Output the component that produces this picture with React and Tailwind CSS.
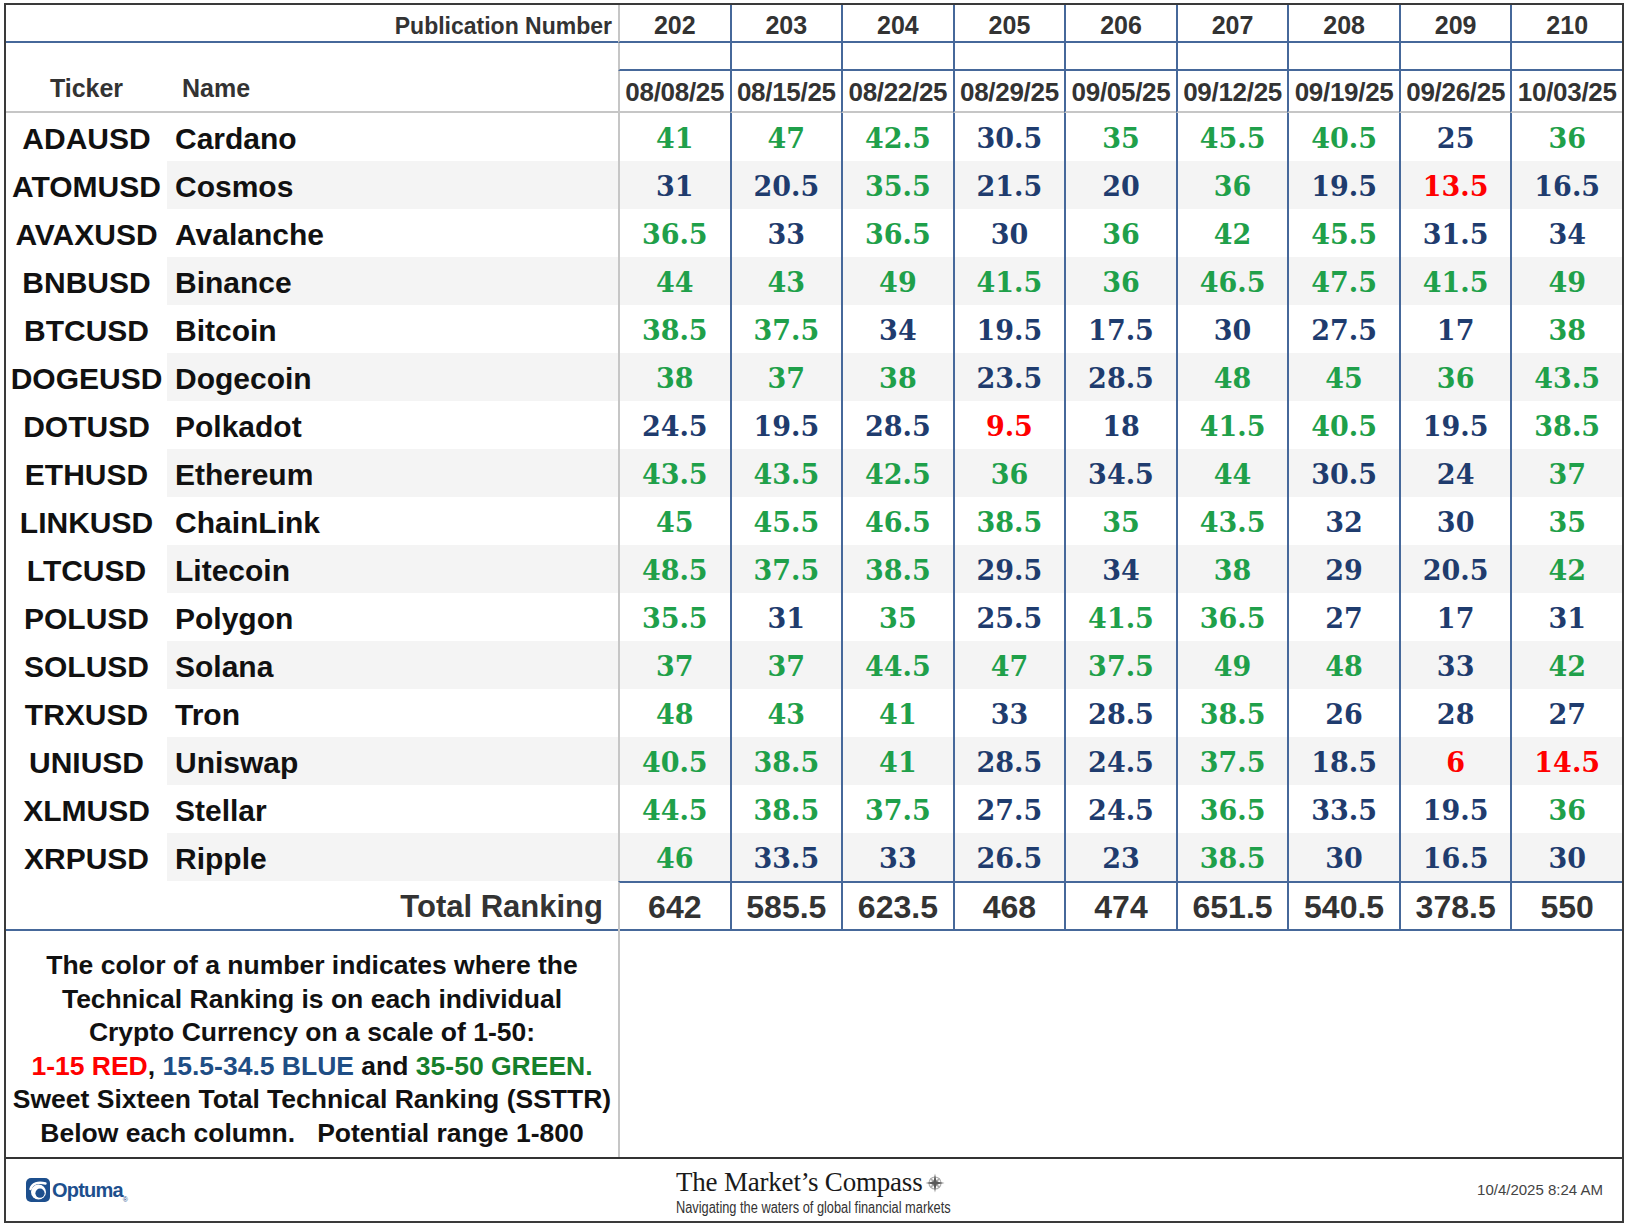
import React from 'react';

const COLS = [
  ['202', '08/08/25'],
  ['203', '08/15/25'],
  ['204', '08/22/25'],
  ['205', '08/29/25'],
  ['206', '09/05/25'],
  ['207', '09/12/25'],
  ['208', '09/19/25'],
  ['209', '09/26/25'],
  ['210', '10/03/25'],
];

const ROWS = [
  ['ADAUSD', 'Cardano', [41, 47, 42.5, 30.5, 35, 45.5, 40.5, 25, 36]],
  ['ATOMUSD', 'Cosmos', [31, 20.5, 35.5, 21.5, 20, 36, 19.5, 13.5, 16.5]],
  ['AVAXUSD', 'Avalanche', [36.5, 33, 36.5, 30, 36, 42, 45.5, 31.5, 34]],
  ['BNBUSD', 'Binance', [44, 43, 49, 41.5, 36, 46.5, 47.5, 41.5, 49]],
  ['BTCUSD', 'Bitcoin', [38.5, 37.5, 34, 19.5, 17.5, 30, 27.5, 17, 38]],
  ['DOGEUSD', 'Dogecoin', [38, 37, 38, 23.5, 28.5, 48, 45, 36, 43.5]],
  ['DOTUSD', 'Polkadot', [24.5, 19.5, 28.5, 9.5, 18, 41.5, 40.5, 19.5, 38.5]],
  ['ETHUSD', 'Ethereum', [43.5, 43.5, 42.5, 36, 34.5, 44, 30.5, 24, 37]],
  ['LINKUSD', 'ChainLink', [45, 45.5, 46.5, 38.5, 35, 43.5, 32, 30, 35]],
  ['LTCUSD', 'Litecoin', [48.5, 37.5, 38.5, 29.5, 34, 38, 29, 20.5, 42]],
  ['POLUSD', 'Polygon', [35.5, 31, 35, 25.5, 41.5, 36.5, 27, 17, 31]],
  ['SOLUSD', 'Solana', [37, 37, 44.5, 47, 37.5, 49, 48, 33, 42]],
  ['TRXUSD', 'Tron', [48, 43, 41, 33, 28.5, 38.5, 26, 28, 27]],
  ['UNIUSD', 'Uniswap', [40.5, 38.5, 41, 28.5, 24.5, 37.5, 18.5, 6, 14.5]],
  ['XLMUSD', 'Stellar', [44.5, 38.5, 37.5, 27.5, 24.5, 36.5, 33.5, 19.5, 36]],
  ['XRPUSD', 'Ripple', [46, 33.5, 33, 26.5, 23, 38.5, 30, 16.5, 30]],
];

const TOTALS = ['642', '585.5', '623.5', '468', '474', '651.5', '540.5', '378.5', '550'];

const GRID = 'grid grid-cols-[161px_451px_repeat(9,minmax(0,1fr))]';

// first data column is divided by a grey rule, the rest by blue ones
const divider = (j) => (j === 0 ? 'border-l-2 border-l-[#c6c6c6]' : 'border-l-2 border-l-[#46689a]');

const tone = (v) => {
  if (v <= 15) return 'text-[#ff0000]';
  if (v < 35) return 'text-[#1f3c6e]';
  return 'text-[#1fa04a]';
};

const OptumaMark = () => (
  <svg width="24" height="24" viewBox="0 0 24 24">
    <rect x="0" y="0" width="24" height="24" rx="5" fill="#1d4f8d" />
    <circle cx="12.5" cy="14" r="7.5" fill="#ffffff" />
    <circle cx="14" cy="15.2" r="4.6" fill="#1d4f8d" />
    <path d="M4.5 11 C6 5.5 12 3.5 19.5 5.5" stroke="#ffffff" strokeWidth="2.4" fill="none" strokeLinecap="round" />
  </svg>
);

const CompassRose = () => (
  <svg width="20" height="20" viewBox="0 0 20 20">
    <circle cx="10" cy="10" r="6" fill="none" stroke="#b0b0b0" strokeWidth="1.2" />
    <path d="M10 3 L11.6 8.4 L17 10 L11.6 11.6 L10 17 L8.4 11.6 L3 10 L8.4 8.4 Z" fill="#a8a8a8" transform="rotate(45 10 10)" />
    <path d="M10 0.5 L11.4 8.6 L19.5 10 L11.4 11.4 L10 19.5 L8.6 11.4 L0.5 10 L8.6 8.6 Z" fill="#5a5a5a" />
  </svg>
);

export default function App() {
  return (
    <div className="w-[1629px] h-[1228px] bg-white overflow-hidden font-['Liberation_Sans',Arial,sans-serif]">
      <div className="mt-[3px] ml-[4px] w-[1620px] h-[1220px] border-2 border-[#3a3a3a] flex flex-col">
        {/* header */}
        <div className={`${GRID} grid-rows-[38px_28px_42px]`}>
          <div className="col-span-2 border-b-2 border-b-[#46689a] flex items-center justify-end pr-[6px] pt-[6px] text-[23px] font-bold text-[#333]">
            Publication Number
          </div>
          {COLS.map((c, j) => (
            <div key={c[0]} className={`${divider(j)} border-b-2 border-b-[#46689a] flex items-center justify-center pt-[6px] text-[25px] font-bold text-[#333]`}>
              {c[0]}
            </div>
          ))}
          <div className="col-span-2 row-span-2 border-b-2 border-b-[#c6c6c6] flex items-end pb-[4px] text-[25px] font-bold text-[#333]">
            <div className="w-[161px] text-center">Ticker</div>
            <div className="pl-[15px]">Name</div>
          </div>
          {COLS.map((c, j) => (
            <div key={c[0] + 'e'} className={`${divider(j)} border-b-2 border-b-[#46689a]`} />
          ))}
          {COLS.map((c, j) => (
            <div key={c[1]} className={`${divider(j)} border-b-2 border-b-[#c6c6c6] flex items-center justify-center pt-[3px] text-[26px] font-bold text-[#333] tracking-[-0.3px] whitespace-nowrap`}>
              {c[1]}
            </div>
          ))}
        </div>

        {/* body */}
        {ROWS.map(([ticker, name, vals], i) => {
          const stripe = i % 2 === 1 ? 'bg-[#f4f4f4]' : 'bg-white';
          return (
            <div key={ticker} className={`${GRID} h-[48px]`}>
              <div className="flex items-center justify-center pt-[3px] text-[30px] font-bold text-[#111] whitespace-nowrap">{ticker}</div>
              <div className={`${stripe} flex items-center pl-[8px] pt-[3px] text-[30px] font-bold text-[#111]`}>{name}</div>
              {vals.map((v, j) => (
                <div key={j} className={`${divider(j)} ${stripe} ${tone(v)} flex items-center justify-center pt-[5px] font-['DejaVu_Serif',serif] text-[27px] font-bold`}>
                  {v}
                </div>
              ))}
            </div>
          );
        })}

        {/* totals */}
        <div className={`${GRID} h-[50px] border-b-2 border-b-[#46689a]`}>
          <div className="col-span-2 flex items-center justify-end pr-[15px] pt-[2px] text-[31px] font-bold text-[#333]">Total Ranking</div>
          {TOTALS.map((t, j) => (
            <div key={j} className={`${divider(j)} border-t-2 border-t-[#46689a] flex items-center justify-center text-[32px] font-bold text-[#333]`}>
              {t}
            </div>
          ))}
        </div>

        {/* legend */}
        <div className={`${GRID} h-[226px]`}>
          <div className="col-span-2 pt-[18px] text-center text-[26.5px] leading-[33.6px] font-bold text-[#111] whitespace-pre">
            <div>The color of a number indicates where the</div>
            <div>Technical Ranking is on each individual</div>
            <div>Crypto Currency on a scale of 1-50:</div>
            <div>
              <span className="text-[#ff0000]">1-15 RED</span>, <span className="text-[#1f4e85]">15.5-34.5 BLUE</span> and{' '}
              <span className="text-[#16802c]">35-50 GREEN.</span>
            </div>
            <div>Sweet Sixteen Total Technical Ranking (SSTTR)</div>
            <div>{'Below each column.   Potential range 1-800'}</div>
          </div>
          <div className="col-span-9 border-l-2 border-l-[#c6c6c6]" />
        </div>

        {/* footer */}
        <div className="h-[64px] border-t-2 border-t-[#333] grid grid-cols-[1fr_auto_1fr] items-center">
          <div className="flex items-center pl-[20px]">
            <OptumaMark />
            <span className="ml-[2px] text-[20px] font-semibold tracking-[-0.8px] text-[#1d4f8d]">Optuma</span>
            <span className="self-start mt-[20px] text-[7px] text-[#1d4f8d]">®</span>
          </div>
          <div className="flex flex-col w-[276px] pt-[2px]">
            <div className="flex items-center">
              <span className="font-['Liberation_Serif',serif] text-[27px] leading-[28px] text-[#1a1a1a] tracking-[-0.2px]">The Market’s Compass</span>
              <span className="ml-[3px] mt-[2px]">
                <CompassRose />
              </span>
            </div>
            <div className="h-[18px]">
              <span className="inline-block origin-left scale-x-[0.8] whitespace-nowrap text-[16px] leading-[18px] text-[#333]">
                Navigating the waters of global financial markets
              </span>
            </div>
          </div>
          <div className="flex justify-end pr-[19px] text-[15px] text-[#444]">10/4/2025 8:24 AM</div>
        </div>
      </div>
    </div>
  );
}
